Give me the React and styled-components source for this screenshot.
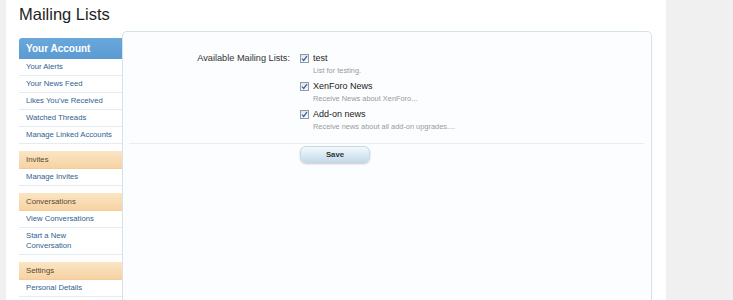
import React from 'react'
import styled, { createGlobalStyle } from 'styled-components'

const GlobalStyle = createGlobalStyle`
  html, body {
    margin: 0;
    background: #f0f0f0;
    font-family: "Liberation Sans", Arial, sans-serif;
  }
`

const Page = styled.div`
  margin-left: 6px;
  width: 660px;
  height: 300px;
  background: #fff;
  padding: 0 14px 0 13px;
  box-sizing: border-box;
  overflow: hidden;
`

const Title = styled.h1`
  margin: 0;
  height: 31px;
  padding-top: 4px;
  box-sizing: border-box;
  font-size: 16.5px;
  font-weight: normal;
  color: #1e1e1e;
  line-height: 20px;
`

const Main = styled.div`
  display: flex;
  align-items: flex-start;
`

const Sidebar = styled.nav`
  width: 103px;
  flex-shrink: 0;
  margin-top: 7px;
`

const Group = styled.div`
  margin-bottom: 7px;
`

const GroupHeader = styled.div`
  display: flex;
  align-items: center;
  padding-left: 7px;
  box-sizing: border-box;
  height: ${p => (p.primary ? '21px' : '18px')};
  background: ${p =>
    p.primary
      ? 'linear-gradient(#6aa8db, #5b9bd2)'
      : 'linear-gradient(#fbe5c4, #f6d3a3)'};
  color: ${p => (p.primary ? '#fff' : '#5b4830')};
  font-size: ${p => (p.primary ? '10px' : '7.8px')};
  font-weight: ${p => (p.primary ? 'bold' : 'normal')};
  border-radius: ${p => (p.primary ? '3px 0 0 0' : '0')};
  border-bottom: 1px solid ${p => (p.primary ? '#5b9bd2' : '#f3cd98')};
`

const Item = styled.a`
  display: flex;
  align-items: center;
  min-height: 17px;
  padding: ${p => (p.multi ? '3px 20px 3px 7px' : '0 0 0 7px')};
  box-sizing: border-box;
  border-bottom: 1px solid #e4ecf1;
  color: #2f6190;
  font-size: 7.7px;
  line-height: 10px;
  text-decoration: none;
`

const Panel = styled.section`
  flex: 1;
  min-height: 280px;
  border: 1px solid #d4e3ea;
  border-bottom: none;
  border-radius: 5px 5px 0 0;
  background: #fcfdfe;
  padding: 18px 7px 0 6px;
`

const FormRow = styled.div`
  display: grid;
  grid-template-columns: 161px 1fr;
  column-gap: 10px;
  padding-bottom: 9px;
  border-bottom: 1px solid #e8eff2;
`

const Label = styled.div`
  text-align: right;
  font-size: 9.2px;
  color: #333;
  line-height: 14px;
  padding-top: 1px;
`

const Options = styled.div`
  display: flex;
  flex-direction: column;
`

const Option = styled.div`
  display: flex;
  flex-direction: column;
`

const OptionTitle = styled.label`
  display: flex;
  align-items: center;
  gap: 4px;
  height: 14px;
  margin-top: 1px;
  font-size: 9px;
  color: #222;
`

const Hint = styled.div`
  padding-left: 13px;
  height: 13px;
  line-height: 12px;
  font-size: 7.4px;
  color: #9a9a9a;
`

const ButtonRow = styled.div`
  display: flex;
  padding: 2px 0 0 171px;
`

const SaveButton = styled.button`
  width: 70px;
  height: 17px;
  border: 1px solid #c7d9e6;
  border-radius: 6px;
  background: linear-gradient(#f4f9fc, #c3daeb);
  box-shadow: 0 1px 2px rgba(0, 0, 0, 0.22);
  font-family: inherit;
  font-size: 7.8px;
  font-weight: bold;
  color: #333;
  padding: 0;
`

const Check = () => (
  <svg width='9' height='9' viewBox='0 0 9 9'>
    <defs>
      <linearGradient id='cb' x1='0' y1='0' x2='0' y2='1'>
        <stop offset='0' stopColor='#e6e6e6' />
        <stop offset='1' stopColor='#fafafa' />
      </linearGradient>
    </defs>
    <rect x='0.5' y='0.5' width='8' height='8' fill='url(#cb)' stroke='#8f9aa3' />
    <path d='M2 4.6 L3.7 6.4 L7 2.2' fill='none' stroke='#3563b3' strokeWidth='1.3' />
  </svg>
)

const menu = [
  { title: 'Your Account', primary: true, items: ['Your Alerts', 'Your News Feed', "Likes You've Received", 'Watched Threads', 'Manage Linked Accounts'] },
  { title: 'Invites', items: ['Manage Invites'] },
  { title: 'Conversations', items: ['View Conversations', 'Start a New Conversation'] },
  { title: 'Settings', items: ['Personal Details'] }
]

const lists = [
  { name: 'test', hint: 'List for testing.' },
  { name: 'XenForo News', hint: 'Receive News about XenForo...' },
  { name: 'Add-on news', hint: 'Receive news about all add-on upgrades....' }
]

export default function App () {
  return (
    <>
      <GlobalStyle />
      <Page>
        <Title>Mailing Lists</Title>
        <Main>
          <Sidebar>
            {menu.map(group => (
              <Group key={group.title}>
                <GroupHeader primary={group.primary}>{group.title}</GroupHeader>
                {group.items.map(item => (
                  <Item key={item} href='#' multi={item.length > 22 && !group.primary}>{item}</Item>
                ))}
              </Group>
            ))}
          </Sidebar>
          <Panel>
            <FormRow>
              <Label>Available Mailing Lists:</Label>
              <Options>
                {lists.map(list => (
                  <Option key={list.name}>
                    <OptionTitle><Check />{list.name}</OptionTitle>
                    <Hint>{list.hint}</Hint>
                  </Option>
                ))}
              </Options>
            </FormRow>
            <ButtonRow>
              <SaveButton>Save</SaveButton>
            </ButtonRow>
          </Panel>
        </Main>
      </Page>
    </>
  )
}
